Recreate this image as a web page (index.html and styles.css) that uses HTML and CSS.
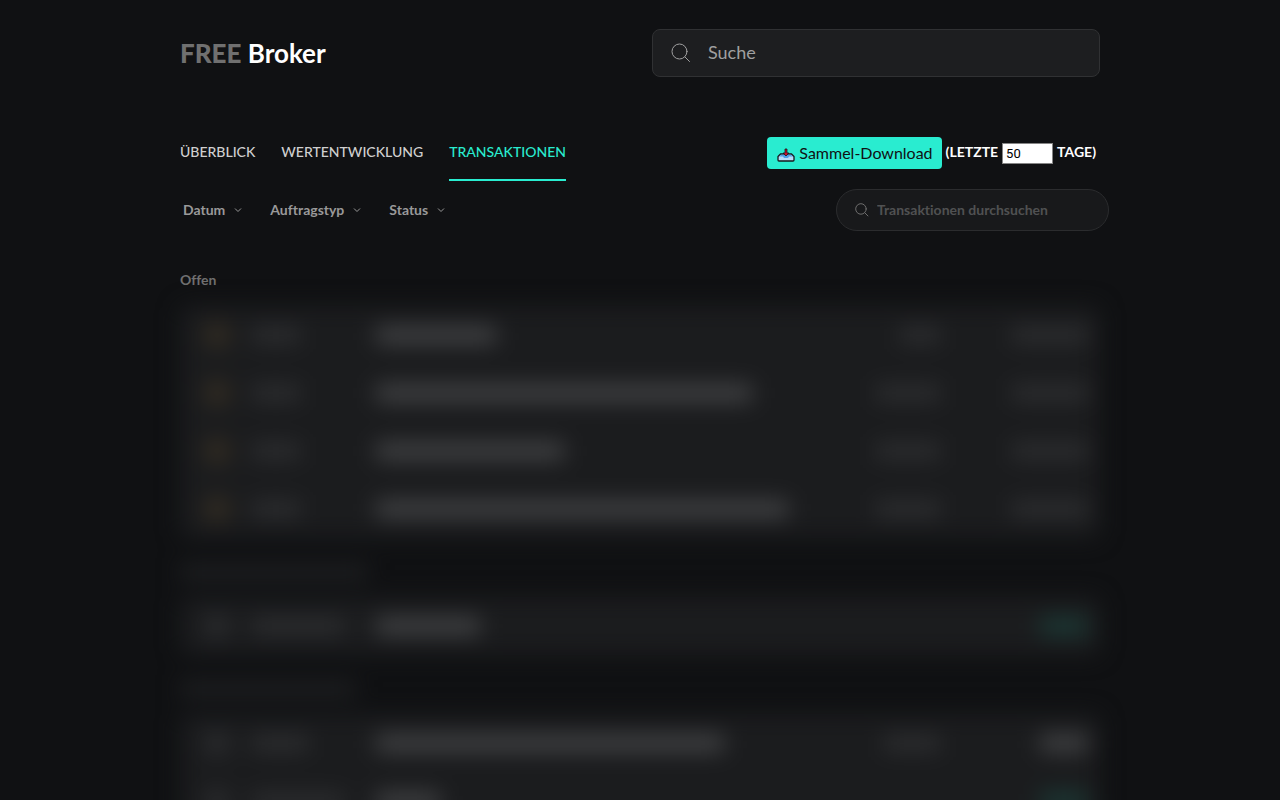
FILE: index.html
```
<!DOCTYPE html>
<html lang="de">
<head>
    <meta charset="UTF-8">
    <meta name="viewport" content="width=device-width, initial-scale=1.0">
    <title>FREE Broker - Transaktionen</title>
    <link rel="stylesheet" href="styles.css">
</head>
<body>
    <div class="container">
        <header class="header">
            <h1 class="logo"><span>FREE</span> Broker</h1>
            <div class="search">
                <svg width="20" height="20" viewBox="0 0 20 20" fill="none" stroke="currentColor" stroke-linecap="round">
                    <circle cx="8.5" cy="8.5" r="7.5"/>
                    <path d="M14 14L18.5 18.5"/>
                </svg>
                <input type="text" placeholder="Suche" aria-label="Suche">
            </div>
        </header>

        <div class="toolbar">
            <nav class="tabs">
                <a href="#">Überblick</a>
                <a href="#">Wertentwicklung</a>
                <a href="#" class="active">Transaktionen</a>
            </nav>
            <div class="download">
                <button type="button" class="download-btn">
                    <svg width="18" height="14" viewBox="0 0 18 14">
                        <path d="M3.5 6L1 8.5V12Q1 13 2 13H16Q17 13 17 12V8.5L14.5 6Z" fill="#b9dcf7" stroke="#15171c" stroke-width="1.3" stroke-linejoin="round"/>
                        <path d="M4 6.7H14L16 8.5H12L11 10H7L6 8.5H2Z" fill="#4f9fe6"/>
                        <path d="M8 1H10V5H12L9 8L6 5H8Z" fill="#c8102e" stroke="#15171c" stroke-width="0.8"/>
                    </svg>
                    Sammel-Download
                </button>
                <label for="days">(Letzte</label>
                <input type="text" id="days" value="50">
                <span>Tage)</span>
            </div>
        </div>

        <div class="filters">
            <div class="filter-list">
                <button type="button">Datum <svg width="8" height="6" viewBox="0 0 8 6"><path d="M1 1.5L4 4.5L7 1.5"/></svg></button>
                <button type="button">Auftragstyp <svg width="8" height="6" viewBox="0 0 8 6"><path d="M1 1.5L4 4.5L7 1.5"/></svg></button>
                <button type="button">Status <svg width="8" height="6" viewBox="0 0 8 6"><path d="M1 1.5L4 4.5L7 1.5"/></svg></button>
            </div>
            <div class="search search-small">
                <svg width="14" height="14" viewBox="0 0 20 20" fill="none" stroke="currentColor" stroke-width="1.4" stroke-linecap="round">
                    <circle cx="8.5" cy="8.5" r="7.5"/>
                    <path d="M14 14L18.5 18.5"/>
                </svg>
                <input type="text" placeholder="Transaktionen durchsuchen" aria-label="Transaktionen durchsuchen">
            </div>
        </div>

        <h2 class="section-title">Offen</h2>

        <!-- private data, always hidden behind the blur -->
        <div class="private" aria-hidden="true">
            <div class="card">
                <div class="row">
                    <i class="dot pending"></i><i class="bar w-48"></i><i class="bar name w-120"></i><i class="bar w-40"></i><i class="bar w-76"></i>
                </div>
                <div class="row">
                    <i class="dot pending"></i><i class="bar w-48"></i><i class="bar name w-376"></i><i class="bar w-64"></i><i class="bar w-76"></i>
                </div>
                <div class="row">
                    <i class="dot pending"></i><i class="bar w-48"></i><i class="bar name w-188"></i><i class="bar w-64"></i><i class="bar w-76"></i>
                </div>
                <div class="row">
                    <i class="dot pending"></i><i class="bar w-48"></i><i class="bar name w-412"></i><i class="bar w-64"></i><i class="bar w-76"></i>
                </div>
            </div>
            <div class="month"><i class="bar w-188"></i></div>
            <div class="card">
                <div class="row">
                    <i class="dot"></i><i class="bar w-92"></i><i class="bar name w-104"></i><i></i><i class="bar income w-48"></i>
                </div>
            </div>
            <div class="month"><i class="bar w-176"></i></div>
            <div class="card">
                <div class="row">
                    <i class="dot"></i><i class="bar w-56"></i><i class="bar name w-348"></i><i class="bar w-56"></i><i class="bar name w-48"></i>
                </div>
                <div class="row">
                    <i class="dot"></i><i class="bar w-92"></i><i class="bar name w-64"></i><i></i><i class="bar income w-48"></i>
                </div>
            </div>
        </div>
    </div>
</body>
</html>
```
FILE: styles.css
```
* {
    box-sizing: border-box;
}

body {
    margin: 0;
    height: 100vh;
    overflow: hidden;
    background-color: #101113;
    color: #fff;
    font-family: Lato, "Open Sans", sans-serif;
    font-size: 14px;
    font-variant-ligatures: none;
}

input,
button {
    font-family: inherit;
    font-variant-ligatures: none;
}

.container {
    max-width: 920px;
    margin: 0 auto;
    padding-top: 29px;
}

.header {
    display: flex;
    justify-content: space-between;
    align-items: center;
}

.logo {
    margin: 0;
    font-size: 26px;
    font-weight: bold;
}

.logo span {
    color: #707070;
    font-weight: 900;
}

/* Search boxes */
.search {
    display: flex;
    align-items: center;
    gap: 17px;
    width: 448px;
    height: 48px;
    padding: 0 18px;
    background-color: #1d1e20;
    border: 1px solid #303133;
    border-radius: 8px;
    color: #a0a0a0;
}

.search input {
    flex: 1;
    min-width: 0;
    padding: 0 0 2px;
    background: none;
    border: none;
    outline: none;
    color: #fff;
    font-size: 18px;
}

.search input::placeholder {
    color: #a0a0a0;
    opacity: 1;
}

.search-small {
    gap: 8px;
    width: 273px;
    height: 42px;
    margin-right: -9px;
    background-color: #18191b;
    border-color: #2b2c2e;
    border-radius: 21px;
    color: #707070;
}

.search-small input {
    font-size: 14px;
    font-weight: bold;
}

.search-small input::placeholder {
    color: #505152;
}

/* Tabs and download */
.toolbar {
    display: flex;
    justify-content: space-between;
    align-items: flex-start;
    margin-top: 60px;
}

.tabs {
    display: flex;
    gap: 26px;
}

.tabs a {
    height: 44px;
    color: #cfcfcf;
    font-weight: 500;
    line-height: 30px;
    text-decoration: none;
    text-transform: uppercase;
}

.tabs a.active {
    color: #29ecd0;
    border-bottom: 2px solid #29ecd0;
}

.download {
    display: flex;
    align-items: center;
    gap: 4px;
    padding-right: 4px;
    font-weight: bold;
    line-height: 20px;
    text-transform: uppercase;
}

.download label,
.download span {
    padding-bottom: 2px;
}

.download-btn {
    display: flex;
    align-items: center;
    gap: 4px;
    height: 32px;
    padding: 0 9px 2px 10px;
    background-color: #29ecd0;
    border: none;
    border-radius: 4px;
    color: #101113;
    font-size: 16px;
    cursor: pointer;
}

.download-btn svg {
    margin-top: 5px;
}

.download input {
    width: 51px;
    height: 21px;
    padding: 1px 3px;
    background-color: #fff;
    border: 1px solid #858585;
    color: #000;
    font-family: Roboto, sans-serif;
    font-size: 13px;
}

/* Filters */
.filters {
    display: flex;
    justify-content: space-between;
    align-items: center;
    margin-top: 8px;
}

.filter-list {
    display: flex;
    gap: 28px;
    padding-left: 3px;
}

.filter-list button {
    display: flex;
    align-items: center;
    gap: 9px;
    padding: 0 0 2px;
    background: none;
    border: none;
    color: #999;
    font-size: 14px;
    font-weight: bold;
    cursor: pointer;
}

.filter-list svg {
    margin-top: 2px;
    fill: none;
    stroke: #999;
}

.section-title {
    margin: 39px 0 16px;
    color: #707070;
    font-size: 14px;
    font-weight: bold;
    line-height: 20px;
}

/* Blurred transactions */
.private {
    filter: blur(11px);
}

.card {
    background-color: #1b1c1e;
    border-radius: 8px;
}

.row {
    display: grid;
    grid-template-columns: 48px 124px 1fr 140px 148px;
    align-items: center;
    height: 58px;
    padding: 0 12px 0 24px;
}

.row > :nth-child(n+4) {
    justify-self: end;
}

.month {
    display: flex;
    align-items: center;
    height: 59px;
    padding-top: 8px;
}

.bar {
    height: 14px;
    background-color: #303133;
}

.month .bar {
    background-color: #202123;
}

.bar.name {
    height: 16px;
    background-color: #454648;
}

.bar.income {
    height: 18px;
    background-color: #1b3935;
}

.dot {
    width: 26px;
    height: 26px;
    background-color: #2b2c2e;
    border-radius: 50%;
}

.dot.pending {
    background-color: #342d22;
}

.w-40 { width: 40px; }
.w-48 { width: 48px; }
.w-56 { width: 56px; }
.w-64 { width: 64px; }
.w-76 { width: 76px; }
.w-92 { width: 92px; }
.w-104 { width: 104px; }
.w-120 { width: 120px; }
.w-176 { width: 176px; }
.w-188 { width: 188px; }
.w-348 { width: 348px; }
.w-376 { width: 376px; }
.w-412 { width: 412px; }
```
